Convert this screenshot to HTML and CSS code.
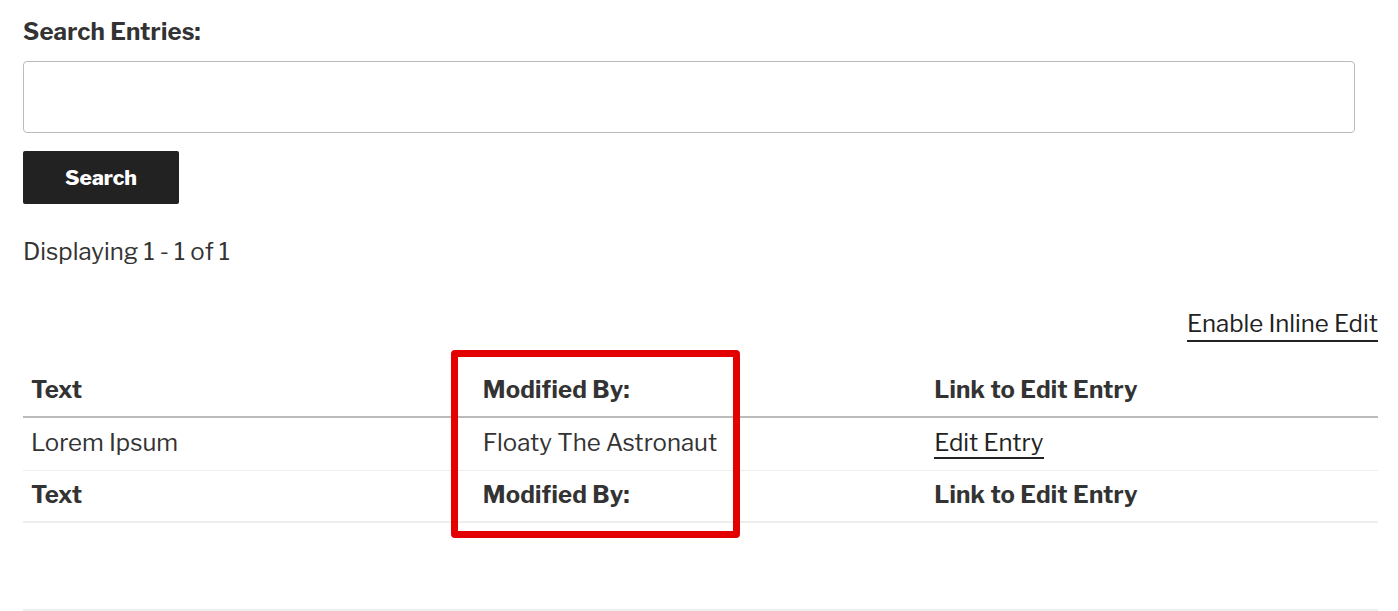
FILE: index.html
```html
<!DOCTYPE html>
<html>
<head>
<meta charset="utf-8">
<link rel="stylesheet" href="styles.css">
</head>
<body>
<div class="page">
  <form class="search">
    <label class="search-label" for="q">Search Entries:</label>
    <input class="search-input" id="q" type="text">
    <button class="search-btn" type="button">Search</button>
  </form>
  <p class="count">Displaying 1 - 1 of 1</p>
  <div class="inline-edit"><a href="#" class="link">Enable Inline Edit</a></div>
  <div class="table-wrap">
    <table class="entries">
      <thead>
        <tr><th>Text</th><th>Modified By:</th><th>Link to Edit Entry</th></tr>
      </thead>
      <tbody>
        <tr><td>Lorem Ipsum</td><td>Floaty The Astronaut</td><td><a href="#" class="link">Edit Entry</a></td></tr>
      </tbody>
      <tfoot>
        <tr><th>Text</th><th>Modified By:</th><th>Link to Edit Entry</th></tr>
      </tfoot>
    </table>
    <div class="highlight"></div>
  </div>
  <div class="bottom-rule"></div>
</div>
</body>
</html>
```

FILE: styles.css
```css
html, body {
  margin: 0;
  padding: 0;
  background: #fff;
}
body {
  font-family: "Libre Franklin", "Open Sans", "Liberation Sans", sans-serif;
  color: #333;
}
.page {
  padding: 0 20px 0 23px;
}
.search {
  display: flex;
  flex-direction: column;
  align-items: flex-start;
}
.search-label {
  font-weight: 700;
  font-size: 24px;
  line-height: 24px;
  letter-spacing: 0.15px;
  margin-top: 20px;
  color: #333;
}
.search-input {
  box-sizing: border-box;
  width: 1332px;
  height: 72px;
  margin: 17px 0 0 0;
  border: 1px solid #bbb;
  border-radius: 4px;
  background: #fff;
}
.search-btn {
  margin-top: 18px;
  width: 156px;
  height: 53px;
  background: #222;
  color: #fff;
  border: 0;
  border-radius: 2px;
  font-family: inherit;
  font-weight: 800;
  font-size: 21px;
}
.count {
  margin: 32px 0 0 0;
  font-size: 24px;
  line-height: 32px;
  color: #333;
}
.inline-edit {
  display: flex;
  justify-content: flex-end;
  margin-top: 40px;
  font-size: 24px;
  line-height: 32px;
}
.link {
  color: #222;
  text-decoration: none;
  box-shadow: inset 0 -2px 0 #222;
  padding-bottom: 2px;
}
.table-wrap {
  position: relative;
  margin-top: 16px;
}
.entries {
  width: 100%;
  border-collapse: collapse;
  table-layout: fixed;
  font-size: 24px;
}
.entries th, .entries td {
  text-align: left;
  padding: 0 8px;
  line-height: 32px;
  color: #333;
}
.entries th {
  font-weight: 700;
  letter-spacing: 0.2px;
}
.entries thead th {
  padding-top: 16px;
  padding-bottom: 10px;
  border-bottom: 2px solid #bbb;
}
.entries tbody td {
  padding-top: 9px;
  padding-bottom: 11px;
  border-bottom: 1px solid #eee;
}
.entries tfoot th {
  padding-top: 8px;
  padding-bottom: 10px;
  border-bottom: 2px solid #eee;
}
.highlight {
  position: absolute;
  left: 428px;
  top: -8px;
  width: 275px;
  height: 174px;
  border: 7px solid #e30000;
  border-radius: 4px;
}
.bottom-rule {
  margin-top: 86px;
  height: 2px;
  background: #eee;
}
```
